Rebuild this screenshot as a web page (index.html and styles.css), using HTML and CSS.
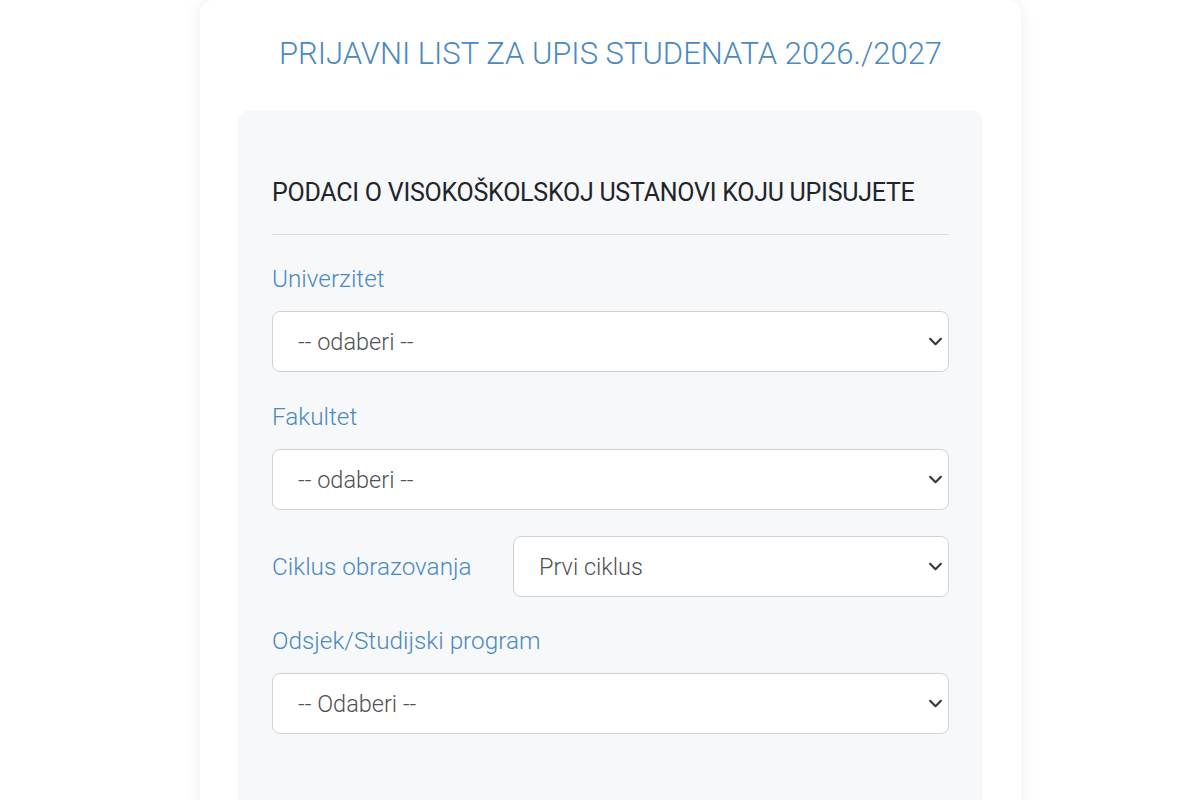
FILE: index.html
```html
<!DOCTYPE html>
<html lang="hr">
<head>
<meta charset="utf-8">
<title>Prijavni list</title>
<link rel="stylesheet" href="styles.css">
</head>
<body>
<div class="page">
  <main class="card">
    <h1 class="title">PRIJAVNI LIST ZA UPIS STUDENATA 2026./2027</h1>
    <section class="panel">
      <h2 class="section-title">PODACI O VISOKOŠKOLSKOJ USTANOVI KOJU UPISUJETE</h2>
      <hr class="divider">

      <div class="group first">
        <label class="label" for="uni">Univerzitet</label>
        <div class="select-wrap">
          <select id="uni" class="select"><option>-- odaberi --</option></select>
          <svg class="chev" viewBox="0 0 16 10" width="15" height="9"><path d="M2 2l6 6 6-6" fill="none" stroke="#343a40" stroke-width="2.4" stroke-linecap="round" stroke-linejoin="round"/></svg>
        </div>
      </div>

      <div class="group">
        <label class="label" for="fak">Fakultet</label>
        <div class="select-wrap">
          <select id="fak" class="select"><option>-- odaberi --</option></select>
          <svg class="chev" viewBox="0 0 16 10" width="15" height="9"><path d="M2 2l6 6 6-6" fill="none" stroke="#343a40" stroke-width="2.4" stroke-linecap="round" stroke-linejoin="round"/></svg>
        </div>
      </div>

      <div class="row">
        <label class="label inline" for="cik">Ciklus obrazovanja</label>
        <div class="select-wrap">
          <select id="cik" class="select"><option>Prvi ciklus</option></select>
          <svg class="chev" viewBox="0 0 16 10" width="15" height="9"><path d="M2 2l6 6 6-6" fill="none" stroke="#343a40" stroke-width="2.4" stroke-linecap="round" stroke-linejoin="round"/></svg>
        </div>
      </div>

      <div class="group">
        <label class="label" for="ods">Odsjek/Studijski program</label>
        <div class="select-wrap">
          <select id="ods" class="select"><option>-- Odaberi --</option></select>
          <svg class="chev" viewBox="0 0 16 10" width="15" height="9"><path d="M2 2l6 6 6-6" fill="none" stroke="#343a40" stroke-width="2.4" stroke-linecap="round" stroke-linejoin="round"/></svg>
        </div>
      </div>
    </section>
  </main>
</div>
</body>
</html>
```
FILE: styles.css
```css
* { box-sizing: border-box; }
html, body { margin: 0; padding: 0; background: #ffffff; }
body { font-family: Roboto, "Liberation Sans", sans-serif; overflow: hidden; }

.page { padding-left: 200px; }

.card {
  width: 821px;
  min-height: 900px;
  background: #ffffff;
  border-radius: 14px;
  box-shadow: 0 0 18px rgba(0, 0, 0, 0.07);
  padding: 36px 38px 0;
}

.title {
  margin: 0;
  text-align: center;
  font-size: 31px;
  line-height: 36px;
  font-weight: 300;
  color: #4a89c2;
}

.panel {
  margin-top: 38px;
  background: #f7f8fa;
  border-radius: 12px;
  padding: 69px 34px 80px;
  min-height: 760px;
}

.section-title {
  margin: 0;
  font-size: 25px;
  line-height: 28px;
  font-weight: 400;
  color: #212529;
  letter-spacing: -0.25px;
}

.divider {
  margin: 27px 0 0;
  border: 0;
  border-top: 1px solid #dcdee2;
}

.group { margin-top: 32px; }
.group.first { margin-top: 31px; }

.label {
  display: block;
  font-size: 24.3px;
  line-height: 26px;
  font-weight: 300;
  color: #4a89c2;
  margin-bottom: 19px;
}

.row {
  margin-top: 26px;
  display: grid;
  grid-template-columns: 241px 1fr;
  align-items: center;
}
.row + .group { margin-top: 31px; }
.label.inline { margin-bottom: 0; }

.select-wrap { position: relative; }

.select {
  display: block;
  width: 100%;
  height: 61px;
  appearance: none;
  -webkit-appearance: none;
  background: #ffffff;
  border: 1px solid #cfd3d8;
  border-radius: 8px;
  padding: 0 40px 0 25px;
  font-family: Roboto, "Liberation Sans", sans-serif;
  font-size: 23.5px;
  font-weight: 300;
  color: #4f5256;
}

.chev {
  position: absolute;
  right: 6px;
  top: 26px;
  pointer-events: none;
}
```
